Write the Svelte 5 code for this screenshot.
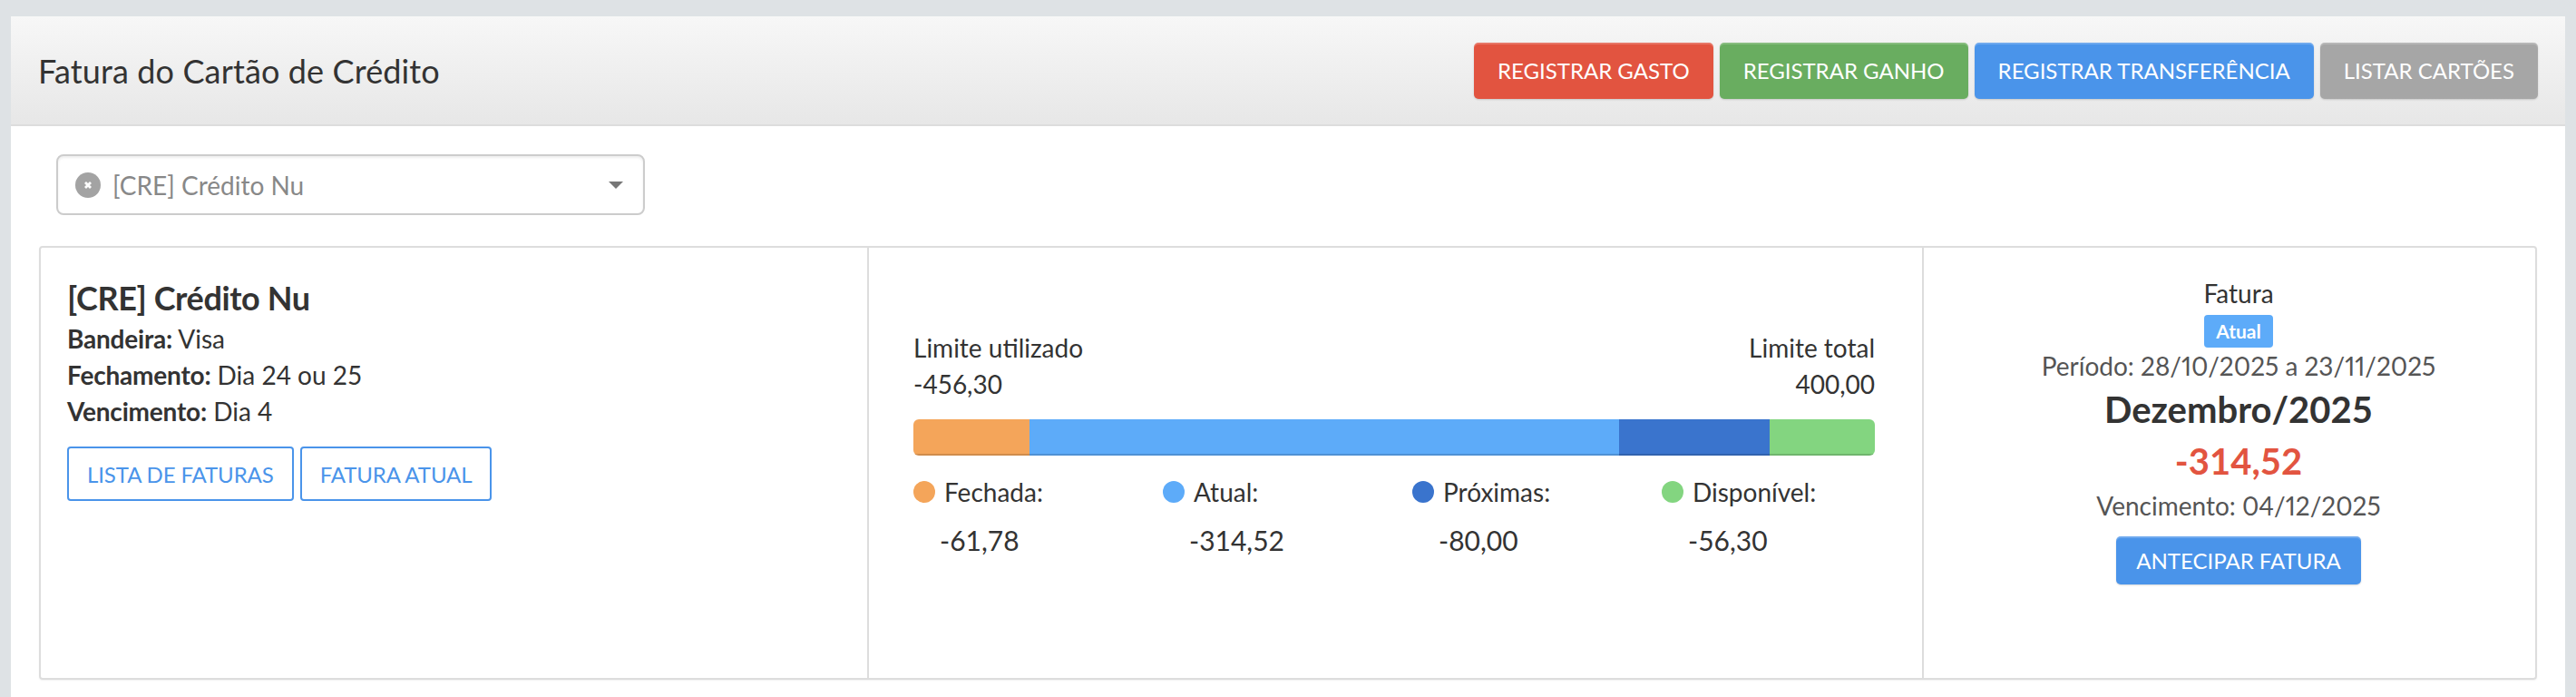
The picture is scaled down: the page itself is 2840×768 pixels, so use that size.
<script>
  const headerButtons = [
    { label: "REGISTRAR GASTO", kind: "red" },
    { label: "REGISTRAR GANHO", kind: "green" },
    { label: "REGISTRAR TRANSFERÊNCIA", kind: "blue" },
    { label: "LISTAR CARTÕES", kind: "grey" }
  ];

  const segments = [
    { label: "Fechada:", value: 61.78, text: "-61,78", color: "#f4a55a" },
    { label: "Atual:", value: 314.52, text: "-314,52", color: "#5dabf9" },
    { label: "Próximas:", value: 80, text: "-80,00", color: "#3a74cd" },
    { label: "Disponível:", value: 56.3, text: "-56,30", color: "#83d580" }
  ];

  const total = segments.reduce((sum, s) => sum + s.value, 0);
</script>

<div class="panel">
  <header class="panel-head">
    <h1>Fatura do Cartão de Crédito</h1>
    <div class="head-actions">
      {#each headerButtons as b}
        <button class="btn {b.kind}">{b.label}</button>
      {/each}
    </div>
  </header>

  <div class="select">
    <span class="clear">
      <svg width="12" height="12" viewBox="0 0 12 12">
        <path d="M3 3l6 6M9 3l-6 6" stroke="#fff" stroke-width="2.8" fill="none" />
      </svg>
    </span>
    <span class="select-value">[CRE] Crédito Nu</span>
    <span class="caret"></span>
  </div>

  <section class="card">
    <div class="col info">
      <h2>[CRE] Crédito Nu</h2>
      <p><b>Bandeira:</b> Visa</p>
      <p><b>Fechamento:</b> Dia 24 ou 25</p>
      <p><b>Vencimento:</b> Dia 4</p>
      <div class="info-actions">
        <button class="btn-outline">LISTA DE FATURAS</button>
        <button class="btn-outline">FATURA ATUAL</button>
      </div>
    </div>

    <div class="col limits">
      <div class="limit-head">
        <div>
          <div>Limite utilizado</div>
          <div>-456,30</div>
        </div>
        <div class="right">
          <div>Limite total</div>
          <div>400,00</div>
        </div>
      </div>

      <div class="bar">
        {#each segments as s}
          <span style="width: {(s.value / total) * 100}%; background: {s.color}"></span>
        {/each}
      </div>

      <div class="legend">
        {#each segments as s}
          <div>
            <div class="legend-label">
              <span class="dot" style="background: {s.color}"></span>
              {s.label}
            </div>
            <div class="legend-value">{s.text}</div>
          </div>
        {/each}
      </div>
    </div>

    <div class="col invoice">
      <div class="line">Fatura</div>
      <span class="badge">Atual</span>
      <div class="line muted">Período: 28/10/2025 a 23/11/2025</div>
      <div class="month">Dezembro/2025</div>
      <div class="amount">-314,52</div>
      <div class="line muted">Vencimento: 04/12/2025</div>
      <button class="btn blue small">ANTECIPAR FATURA</button>
    </div>
  </section>
</div>

<style>
  :global(body) {
    margin: 0;
    background: #dee2e5;
    font-family: Lato, "Open Sans", sans-serif;
    color: #333;
  }

  .panel {
    margin: 18px 12px 0;
    min-height: 750px;
    background: #fff;
  }

  .panel-head {
    display: flex;
    align-items: center;
    justify-content: space-between;
    box-sizing: border-box;
    height: 121px;
    padding: 0 30px 0 30px;
    background: linear-gradient(#f7f7f7, #e7e7e7);
    border-bottom: 2px solid #ddd;
  }

  h1 {
    margin: 0;
    font-size: 36px;
    font-weight: 400;
    letter-spacing: 0.13px;
    color: #333;
  }

  .head-actions {
    display: flex;
    gap: 7px;
  }

  .btn {
    height: 62px;
    padding: 0 26px;
    border: 0;
    border-radius: 5px;
    font: 400 24px Lato, sans-serif;
    color: #fff;
    box-shadow: inset 0 2px 0 rgba(255, 255, 255, 0.2), 0 1px 2px rgba(0, 0, 0, 0.15);
  }

  .red { background: #e25440; }
  .green { background: #69ad60; }
  .blue { background: #4a94ea; }
  .grey { background: #a6a6a6; }

  .select {
    display: flex;
    align-items: center;
    box-sizing: border-box;
    width: 649px;
    height: 67px;
    margin: 31px 0 34px 50px;
    padding: 0 22px 0 19px;
    border: 2px solid #ccc;
    border-radius: 8px;
    box-shadow: inset 0 2px 3px rgba(0, 0, 0, 0.07);
    font-size: 28px;
    color: #888;
  }

  .clear {
    display: flex;
    align-items: center;
    justify-content: center;
    width: 28px;
    height: 28px;
    margin-right: 13px;
    border-radius: 50%;
    background: #a3a3a3;
  }

  .select-value {
    flex: 1;
  }

  .caret {
    border-left: 8px solid transparent;
    border-right: 8px solid transparent;
    border-top: 8px solid #777;
  }

  .card {
    display: grid;
    grid-template-columns: 911px 1163px 1fr;
    box-sizing: border-box;
    height: 478px;
    margin: 0 31px;
    border: 2px solid #ddd;
    border-radius: 4px;
    box-shadow: 0 1px 2px rgba(0, 0, 0, 0.06);
    font-size: 28px;
    line-height: 40px;
  }

  .col + .col {
    border-left: 2px solid #ddd;
  }

  .info {
    padding: 35px 29px 0;
  }

  h2 {
    margin: 0 0 5px;
    font-size: 36px;
    line-height: 40px;
    font-weight: 700;
    letter-spacing: -0.4px;
  }

  p {
    margin: 0;
  }

  b {
    letter-spacing: -0.2px;
  }

  .info-actions {
    display: flex;
    gap: 7px;
    margin-top: 19px;
  }

  .btn-outline {
    height: 60px;
    padding: 0 20px;
    background: #fff;
    border: 2px solid #4a94ea;
    border-radius: 4px;
    font: 400 24px Lato, sans-serif;
    letter-spacing: -0.1px;
    color: #4a94ea;
  }

  .limits {
    padding: 90px 52px 0 49px;
  }

  .limit-head {
    display: flex;
    justify-content: space-between;
  }

  .right {
    text-align: right;
  }

  .bar {
    display: flex;
    height: 40px;
    margin: 19px 0 20px;
    border-radius: 6px;
    overflow: hidden;
  }

  .bar span {
    box-shadow: inset 0 -2px 0 rgba(0, 0, 0, 0.15);
  }

  .legend {
    display: grid;
    grid-template-columns: repeat(4, 1fr);
    column-gap: 40px;
  }

  .legend-label {
    display: flex;
    align-items: center;
    gap: 10px;
  }

  .dot {
    width: 24px;
    height: 24px;
    border-radius: 50%;
  }

  .legend-value {
    margin-top: 13px;
    padding-left: 29px;
    font-size: 30px;
  }

  .invoice {
    display: flex;
    flex-direction: column;
    align-items: center;
    padding: 30px 0 0 20px;
    text-align: center;
  }

  .badge {
    box-sizing: border-box;
    width: 76px;
    height: 36px;
    margin-top: 4px;
    border-radius: 4px;
    background: #5dabf9;
    color: #fff;
    font-size: 21px;
    font-weight: 700;
    line-height: 36px;
  }

  .muted {
    color: #555;
    font-variant-numeric: proportional-nums;
  }

  .month {
    margin-top: 3px;
    font-size: 40px;
    line-height: 50px;
    font-weight: 700;
  }

  .amount {
    margin-top: 7px;
    font-size: 40px;
    line-height: 50px;
    font-weight: 700;
    color: #e25440;
  }

  .amount + .line {
    margin-top: 4px;
  }

  .small {
    height: 53px;
    margin-top: 14px;
    padding: 0 22px;
  }
</style>
